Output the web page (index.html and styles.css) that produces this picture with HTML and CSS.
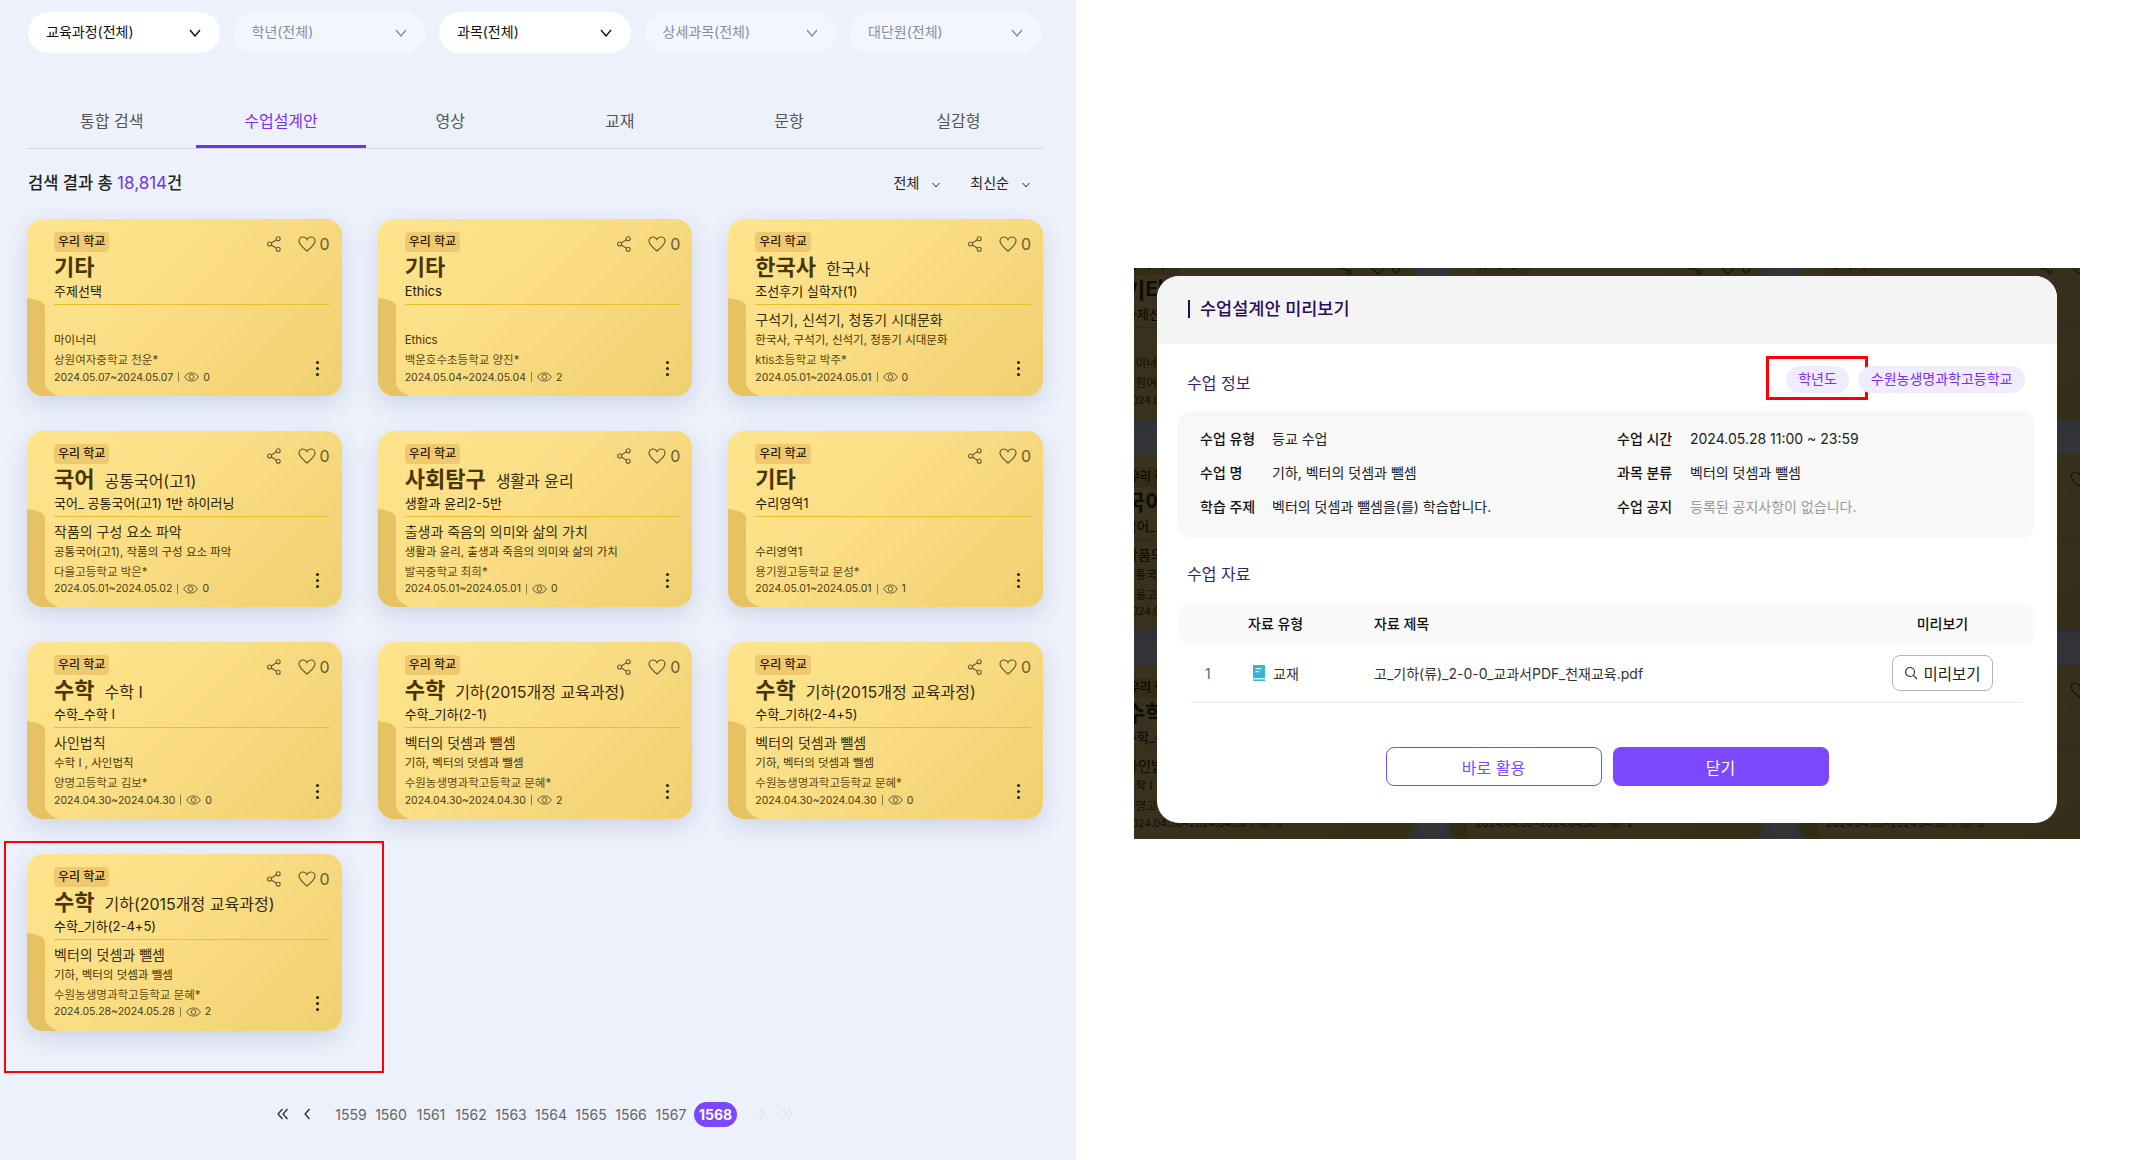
FILE: index.html
```html
<!DOCTYPE html>
<html lang="ko">
<head>
  <meta charset="UTF-8">
  <title>수업설계안 검색</title>
  <link rel="stylesheet" href="styles.css">
</head>
<body>

<svg class="sprite" width="0" height="0">
  <symbol id="i-down" viewBox="0 0 12 8"><path d="M1 1l5 6 5-6" fill="none" stroke="currentColor" stroke-width="1.4"/></symbol>
  <symbol id="i-share" viewBox="0 0 14 16"><g fill="none" stroke="currentColor" stroke-width="1.1"><circle cx="2.6" cy="8" r="2"/><circle cx="11.2" cy="2.7" r="2"/><circle cx="11.2" cy="13.3" r="2"/><path d="M4.3 7l5.2-3.3M4.3 9l5.2 3.3"/></g></symbol>
  <symbol id="i-heart" viewBox="0 0 18 16"><path d="M9 15C5 11.5 1 8.6 1 5c0-2.3 1.8-4 3.9-4C6.7 1 8.2 2 9 3.6 9.800 2 11.3 1 13.1 1 15.2 1 17 2.7 17 5c0 3.6-4 6.5-8 10z" fill="none" stroke="currentColor" stroke-width="1.2"/></symbol>
  <symbol id="i-eye" viewBox="0 0 16 10"><g fill="none" stroke="currentColor" stroke-width="1"><path d="M.7 5C2.5 2 5 .7 8 .7S13.5 2 15.3 5C13.5 8 11 9.3 8 9.3S2.5 8 .7 5z"/><circle cx="8" cy="5" r="2.5"/></g></symbol>
  <symbol id="i-fold" viewBox="0 0 32 98" preserveAspectRatio="none"><path d="M0 0C5 .5 11 2 14 3.5 17 5 18 7 18 10V85C18 90 25 96 32 98H0z" fill="#e6c263"/></symbol>
  <symbol id="i-left" viewBox="0 0 6 12"><path d="M5.5 1L1 6l4.5 5" fill="none" stroke="currentColor" stroke-width="1.2"/></symbol>
  <symbol id="i-right" viewBox="0 0 6 12"><path d="M.5 1L5 6l-4.5 5" fill="none" stroke="currentColor" stroke-width="1.2"/></symbol>
  <symbol id="i-first" viewBox="0 0 11 12"><path d="M5.5 1L1 6l4.5 5M10.5 1L6 6l4.5 5" fill="none" stroke="currentColor" stroke-width="1.2"/></symbol>
  <symbol id="i-last" viewBox="0 0 11 12"><path d="M.5 1L5 6l-4.5 5M5.5 1L10 6l-4.5 5" fill="none" stroke="currentColor" stroke-width="1.2"/></symbol>
</svg>

<main class="search-page">
  <div class="filters">
    <div class="filter">교육과정(전체)<svg class="down"><use href="#i-down"/></svg></div>
    <div class="filter off">학년(전체)<svg class="down"><use href="#i-down"/></svg></div>
    <div class="filter">과목(전체)<svg class="down"><use href="#i-down"/></svg></div>
    <div class="filter off">상세과목(전체)<svg class="down"><use href="#i-down"/></svg></div>
    <div class="filter off">대단원(전체)<svg class="down"><use href="#i-down"/></svg></div>
  </div>

  <nav class="tabs">
    <a>통합 검색</a>
    <a class="on">수업설계안</a>
    <a>영상</a>
    <a>교재</a>
    <a>문항</a>
    <a>실감형</a>
  </nav>

  <div class="result-bar">
    <div class="result-total">검색 결과 총 <em>18,814</em>건</div>
    <div class="result-sort">
      <span>전체<svg class="down-sm"><use href="#i-down"/></svg></span>
      <span>최신순<svg class="down-sm"><use href="#i-down"/></svg></span>
    </div>
  </div>

  <div class="card-grid" id="cards"></div>

  <div class="pager">
    <svg class="pg-first"><use href="#i-first"/></svg>
    <svg class="pg-prev"><use href="#i-left"/></svg>
    <div class="pages">
      <a>1559</a><a>1560</a><a>1561</a><a>1562</a><a>1563</a><a>1564</a><a>1565</a><a>1566</a><a>1567</a><a class="on">1568</a>
    </div>
    <svg class="pg-next"><use href="#i-right"/></svg>
    <svg class="pg-last"><use href="#i-last"/></svg>
  </div>

  <div class="mark mark-card"></div>
</main>

<aside class="preview-side">
  <div class="shot">
    <div class="card-grid shot-cards" id="shotCards"></div>
    <div class="shot-dim"></div>

    <div class="modal">
      <header class="modal-head"><h2>수업설계안 미리보기</h2></header>

      <div class="section-head">
        <h3>수업 정보</h3>
        <div class="chips">
          <span class="chip">학년도<i class="mark mark-chip"></i></span>
          <span class="chip">수원농생명과학고등학교</span>
        </div>
      </div>

      <div class="info-box">
        <b>수업 유형</b><span>등교 수업</span>
        <b>수업 시간</b><span>2024.05.28 11:00 ~ 23:59</span>
        <b>수업 명</b><span>기하, 벡터의 덧셈과 뺄셈</span>
        <b>과목 분류</b><span>벡터의 덧셈과 뺄셈</span>
        <b>학습 주제</b><span>벡터의 덧셈과 뺄셈을(를) 학습합니다.</span>
        <b>수업 공지</b><span class="muted">등록된 공지사항이 없습니다.</span>
      </div>

      <h3 class="material-title">수업 자료</h3>

      <div class="table-head">
        <span>자료 유형</span>
        <span>자료 제목</span>
        <span class="center">미리보기</span>
      </div>
      <div class="table-row">
        <span class="num">1</span>
        <span class="kind">
          <svg width="14" height="16" viewBox="0 0 14 16"><path d="M1 0h12v16H2a1 1 0 0 1-1-1z" fill="#37b4cf"/><path d="M1 13h12v1.5H1z" fill="#d5f1f6"/><path d="M3.5 3h6v1.3h-6zM3.5 6h4v1.3h-4z" fill="#d5f1f6"/></svg>
          교재
        </span>
        <span>고_기하(류)_2-0-0_교과서PDF_천재교육.pdf</span>
        <button class="btn-look">
          <svg width="14" height="14" viewBox="0 0 14 14"><g fill="none" stroke="#333" stroke-width="1.2"><circle cx="6" cy="6" r="4.5"/><path d="M9.3 9.3L13 13"/></g></svg>
          미리보기
        </button>
      </div>

      <div class="modal-actions">
        <button class="btn-line">바로 활용</button>
        <button class="btn-fill">닫기</button>
      </div>
    </div>
  </div>
</aside>

<script src="script.js"></script>
</body>
</html>
```
FILE: styles.css
```css
* {
  box-sizing: border-box;
}

body {
  margin: 0;
  display: flex;
  width: 2149px;
  height: 1160px;
  overflow: hidden;
  background-color: #fff;
  font-family: Inter, "Noto Sans CJK KR", "Noto Sans", sans-serif;
  color: #222;
}

h2, h3 {
  margin: 0;
  font-weight: 400;
}

.sprite {
  position: absolute;
}

.search-page {
  position: relative;
  width: 1076px;
  height: 1160px;
  padding: 12px 33px 0 27px;
  background-color: #ecf1fb;
}

/* filters */
.filters {
  display: flex;
  justify-content: space-between;
  padding: 0 1px;
}

.filter {
  display: flex;
  align-items: center;
  justify-content: space-between;
  width: 192px;
  height: 41px;
  padding: 0 19px 4px 18px;
  border-radius: 21px;
  background-color: #fff;
  font-size: 14px;
  color: #111;
}

.filter.off {
  background-color: #f2f6fe;
  color: #8a8f98;
}

.down {
  width: 12px;
  height: 8px;
  margin-top: 4px;
}

.down-sm {
  width: 8px;
  height: 6px;
  margin-left: 13px;
}

/* tabs */
.tabs {
  display: flex;
  height: 53px;
  margin-top: 43px;
  border-bottom: 1px solid #d8d9dc;
}

.tabs a {
  flex: 1;
  padding-top: 12px;
  line-height: 26px;
  text-align: center;
  font-size: 16px;
  color: #555;
}

.tabs a.on {
  color: #7a2ff7;
  border-bottom: 3px solid #6f35e8;
  height: 52px;
}

/* result bar */
.result-bar {
  display: flex;
  justify-content: space-between;
  align-items: center;
  height: 24px;
  margin-top: 21px;
  margin-bottom: 25px;
}

.result-total {
  padding-left: 1px;
  font-size: 16.5px;
  font-weight: 500;
}

.result-total em {
  font-style: normal;
  font-weight: 400;
  font-size: 17px;
  color: #6c35ee;
}

.result-sort {
  display: flex;
  gap: 30px;
  padding-right: 13px;
  font-size: 14px;
}

/* cards */
.card-grid {
  display: grid;
  grid-template-columns: repeat(3, 1fr);
  grid-auto-rows: 176.67px;
  column-gap: 36px;
  row-gap: 35px;
}

.card-wrap {
  border-radius: 16px;
  box-shadow: 0 8px 22px rgba(70, 85, 140, 0.18);
}

.card {
  position: relative;
  height: 100%;
  padding: 13px 12px 0 27px;
  border-radius: 16px;
  overflow: hidden;
  background: linear-gradient(135deg, #ffe48c 0%, #fbdf86 40%, #efd070 100%);
}

.card-fold {
  position: absolute;
  left: 0;
  bottom: 0;
  width: 32px;
  height: 98px;
}

.card-top {
  display: flex;
  justify-content: space-between;
  height: 20px;
}

.badge {
  padding: 0 4px;
  border-radius: 4px;
  background-color: #eec96f;
  line-height: 20px;
  font-size: 12px;
  font-weight: 500;
  color: #2b2000;
}

.card-acts {
  display: flex;
  align-items: center;
  height: 18px;
  margin-top: 3px;
  color: #6a5a32;
  font-size: 16px;
}

.card-acts .share {
  width: 14px;
  height: 16px;
  margin-right: 17px;
}

.card-acts .heart {
  width: 18px;
  height: 16px;
  margin-right: 4px;
}

.card-title {
  height: 30px;
  line-height: 30px;
  white-space: nowrap;
  font-size: 16px;
  color: #33290c;
}

.card-title b {
  margin-right: 10px;
  font-size: 22px;
  font-weight: 700;
  color: #4a3500;
}

.card-sub {
  height: 20px;
  margin-top: -1px;
  line-height: 20px;
  font-size: 13px;
  color: #1f1800;
}

.card-line {
  height: 1px;
  margin-top: 3px;
  background-color: #e9bf2f;
}

.card-topic {
  height: 20px;
  margin-top: 5px;
  line-height: 20px;
  font-size: 14px;
  color: #3a2e08;
}

.card-desc {
  height: 18px;
  margin-top: 1px;
  line-height: 18px;
  font-size: 11.5px;
  color: #4a3500;
}

.card-foot {
  display: flex;
  justify-content: space-between;
  align-items: center;
  margin-top: 3px;
  padding-right: 11px;
}

.card-school {
  height: 17px;
  line-height: 17px;
  font-size: 11.5px;
  color: #5f4a12;
}

.card-date {
  display: flex;
  align-items: center;
  height: 16px;
  font-size: 10.5px;
  color: #4a3a10;
}

.card-date .eye {
  width: 15px;
  height: 10px;
  margin: 0 4px 0 0;
  color: #5f5130;
}

.card-date i {
  width: 1px;
  height: 10px;
  margin: 0 5px;
  background-color: #8b7a45;
}

.dots {
  display: flex;
  flex-direction: column;
  gap: 3px;
}

.dots i {
  width: 3px;
  height: 3px;
  border-radius: 50%;
  background-color: #222;
}

/* pager */
.pager {
  display: flex;
  align-items: center;
  height: 25px;
  margin-top: 71px;
  padding-left: 250px;
  color: #222;
}

.pager svg {
  height: 12px;
}

.pg-first {
  width: 11px;
  margin-right: 16px;
}

.pg-prev {
  width: 6px;
  margin-right: 24px;
}

.pg-next {
  width: 6px;
  margin-left: 22px;
  color: #dde1ea;
}

.pg-last {
  width: 11px;
  margin-left: 17px;
  color: #dde1ea;
}

.pages {
  display: flex;
  gap: 6px;
  font-size: 14px;
  color: #666;
}

.pages a {
  width: 34px;
  text-align: center;
  line-height: 25px;
}

.pages a.on {
  width: 43px;
  border-radius: 13px;
  background-color: #7c48fb;
  color: #fff;
  font-weight: 700;
}

/* red marks on the capture */
.mark {
  position: absolute;
  border: 2px solid #f00;
  pointer-events: none;
}

.mark-card {
  left: 4px;
  top: 841px;
  width: 380px;
  height: 232px;
}

.mark-chip {
  left: -20px;
  top: -10px;
  width: 102px;
  height: 44px;
  border-width: 3px;
}

/* right side capture */
.preview-side {
  flex: 1;
  padding: 268px 0 0 58px;
}

.shot {
  position: relative;
  width: 946px;
  height: 571px;
  overflow: hidden;
  background-color: #ecf1fb;
}

.shot-cards {
  width: 1016px;
  margin: -26px 0 0 -36px;
}

.shot-dim {
  position: absolute;
  inset: 0;
  background-color: rgba(0, 0, 0, 0.78);
}

.modal {
  position: absolute;
  left: 23px;
  top: 8px;
  width: 900px;
  height: 547px;
  border-radius: 22px;
  background-color: #fff;
  overflow: hidden;
}

.modal-head {
  height: 68px;
  padding: 24px 0 0 31px;
  background-color: #f4f4f5;
}

.modal-head h2 {
  padding-left: 10px;
  border-left: 2px solid #2a0a5e;
  line-height: 18px;
  font-size: 17.5px;
  font-weight: 500;
  color: #2a0a5e;
}

.section-head {
  display: flex;
  justify-content: space-between;
  height: 27px;
  margin-top: 22px;
  padding: 0 32px 0 30px;
}

.section-head h3 {
  padding-top: 4px;
  line-height: 26px;
  font-size: 16px;
  color: #3a1d6e;
}

.chips {
  display: flex;
  gap: 9px;
}

.chip {
  position: relative;
  padding: 0 12.5px;
  border-radius: 14px;
  background-color: #f0ebfe;
  line-height: 26px;
  font-size: 14px;
  color: #7a2ff7;
}

.info-box {
  display: grid;
  grid-template-columns: 72px 345px 73px 1fr;
  margin: 18px 22px 0 21px;
  padding: 11px 22px 14px;
  border-radius: 14px;
  background-color: #f8f8f8;
  line-height: 34px;
  font-size: 14px;
}

.info-box b {
  font-weight: 500;
  color: #111;
}

.muted {
  color: #999;
}

.material-title {
  margin: 23px 0 0 30px;
  line-height: 26px;
  font-size: 16px;
  color: #3a1d6e;
}

.table-head {
  display: grid;
  grid-template-columns: 126px 1fr 101px;
  align-items: center;
  height: 43px;
  margin: 16px 22px 0 21px;
  padding: 0 42px 3px 70px;
  border-radius: 14px;
  background-color: #fafafa;
  font-size: 14px;
  font-weight: 500;
  color: #111;
}

.center {
  text-align: center;
}

.table-row {
  display: grid;
  grid-template-columns: 43px 126px 1fr 101px;
  align-items: center;
  height: 57px;
  margin: 0 35px 0 34px;
  padding: 0 29px 2px 14px;
  border-bottom: 1px solid #e8e8e8;
  font-size: 14px;
  color: #333;
}

.num {
  color: #666;
}

.kind {
  display: flex;
  align-items: center;
  gap: 7px;
  padding-left: 4px;
}

.btn-look {
  display: flex;
  align-items: center;
  justify-content: center;
  gap: 5px;
  height: 36px;
  padding: 0;
  border: 1px solid #b5b5b5;
  border-radius: 8px;
  background-color: #fff;
  font: inherit;
  font-size: 15.5px;
  color: #222;
}

.modal-actions {
  display: flex;
  justify-content: center;
  gap: 11px;
  margin-top: 44px;
}

.modal-actions button {
  width: 216px;
  height: 39px;
  border-radius: 8px;
  font: inherit;
  font-size: 16px;
}

.btn-line {
  border: 1.5px solid #7c48fb;
  background-color: #fff;
  color: #7c48fb;
}

.btn-fill {
  border: none;
  background-color: #7c48fb;
  color: #fff;
}
```
FILE: script.js
```js
const GEO = "수학";
const GEO_SUB = "기하(2015개정 교육과정)";
const GEO_TOPIC = "벡터의 덧셈과 뺄셈";
const GEO_DESC = "기하, 벡터의 덧셈과 뺄셈";
const GEO_SCHOOL = "수원농생명과학고등학교 문혜*";

const cards = [
  ["기타", "", "주제선택", "", "마이너리", "상원여자중학교 천운*", "2024.05.07~2024.05.07", 0],
  ["기타", "", "Ethics", "", "Ethics", "백운호수초등학교 양진*", "2024.05.04~2024.05.04", 2],
  ["한국사", "한국사", "조선후기 실학자(1)", "구석기, 신석기, 청동기 시대문화", "한국사, 구석기, 신석기, 청동기 시대문화", "ktis초등학교 박주*", "2024.05.01~2024.05.01", 0],
  ["국어", "공통국어(고1)", "국어_ 공통국어(고1) 1반 하이러닝", "작품의 구성 요소 파악", "공통국어(고1), 작품의 구성 요소 파악", "다을고등학교 박은*", "2024.05.01~2024.05.02", 0],
  ["사회탐구", "생활과 윤리", "생활과 윤리2-5반", "출생과 죽음의 의미와 삶의 가치", "생활과 윤리, 출생과 죽음의 의미와 삶의 가치", "발곡중학교 최희*", "2024.05.01~2024.05.01", 0],
  ["기타", "", "수리영역1", "", "수리영역1", "용기원고등학교 문성*", "2024.05.01~2024.05.01", 1],
  ["수학", "수학 I", "수학_수학 I", "사인법칙", "수학 I , 사인법칙", "양명고등학교 김보*", "2024.04.30~2024.04.30", 0],
  [GEO, GEO_SUB, "수학_기하(2-1)", GEO_TOPIC, GEO_DESC, GEO_SCHOOL, "2024.04.30~2024.04.30", 2],
  [GEO, GEO_SUB, "수학_기하(2-4+5)", GEO_TOPIC, GEO_DESC, GEO_SCHOOL, "2024.04.30~2024.04.30", 0],
  [GEO, GEO_SUB, "수학_기하(2-4+5)", GEO_TOPIC, GEO_DESC, GEO_SCHOOL, "2024.05.28~2024.05.28", 2]
];

function cardHtml(c) {
  return `
  <div class="card-wrap"><div class="card">
    <svg class="card-fold"><use href="#i-fold"/></svg>
    <div class="card-top">
      <span class="badge">우리 학교</span>
      <span class="card-acts">
        <svg class="share"><use href="#i-share"/></svg>
        <svg class="heart"><use href="#i-heart"/></svg>0
      </span>
    </div>
    <div class="card-title"><b>${c[0]}</b>${c[1]}</div>
    <div class="card-sub">${c[2]}</div>
    <div class="card-line"></div>
    <div class="card-topic">${c[3]}</div>
    <div class="card-desc">${c[4]}</div>
    <div class="card-foot">
      <div>
        <div class="card-school">${c[5]}</div>
        <div class="card-date">${c[6]}<i></i><svg class="eye"><use href="#i-eye"/></svg>${c[7]}</div>
      </div>
      <div class="dots"><i></i><i></i><i></i></div>
    </div>
  </div></div>`;
}

document.getElementById("cards").innerHTML = cards.map(cardHtml).join("");
document.getElementById("shotCards").innerHTML = cards.slice(0, 9).map(cardHtml).join("");
```
